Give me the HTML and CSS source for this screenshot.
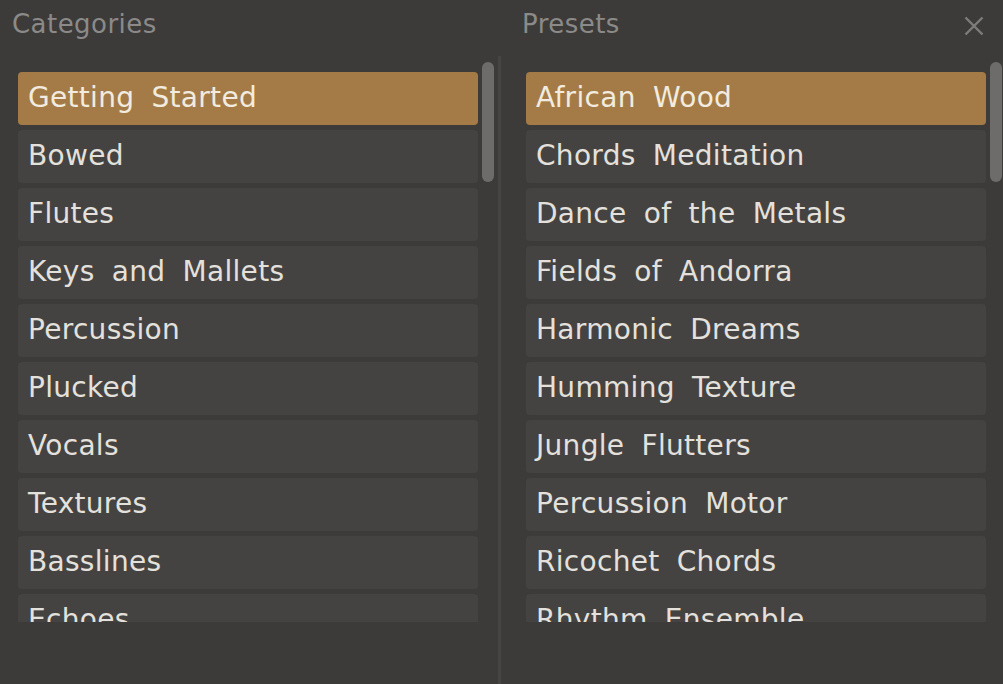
FILE: index.html
```html
<!DOCTYPE html>
<html>
<head>
<meta charset="utf-8">
<link rel="stylesheet" href="styles.css">
</head>
<body>
<div class="browser">
  <div class="head head-left"><span class="title">Categories</span></div>
  <div class="head-gap"></div>
  <div class="head head-right">
    <span class="title">Presets</span>
    <svg class="close" width="20" height="20" viewBox="0 0 20 20"><path d="M1.5 1.5 L18.5 18.5 M18.5 1.5 L1.5 18.5" stroke="#7d7c7b" stroke-width="2.4" stroke-linecap="butt"/></svg>
  </div>

  <div class="body body-left">
    <div class="list">
      <div class="item selected">Getting Started</div>
      <div class="item">Bowed</div>
      <div class="item">Flutes</div>
      <div class="item">Keys and Mallets</div>
      <div class="item">Percussion</div>
      <div class="item">Plucked</div>
      <div class="item">Vocals</div>
      <div class="item">Textures</div>
      <div class="item">Basslines</div>
      <div class="item">Echoes</div>
    </div>
    <div class="track"><div class="thumb"></div></div>
  </div>
  <div class="divider"></div>
  <div class="body body-right">
    <div class="list">
      <div class="item selected">African Wood</div>
      <div class="item">Chords Meditation</div>
      <div class="item">Dance of the Metals</div>
      <div class="item">Fields of Andorra</div>
      <div class="item">Harmonic Dreams</div>
      <div class="item">Humming Texture</div>
      <div class="item">Jungle Flutters</div>
      <div class="item">Percussion Motor</div>
      <div class="item">Ricochet Chords</div>
      <div class="item">Rhythm Ensemble</div>
    </div>
    <div class="track"><div class="thumb"></div></div>
  </div>
</div>
</body>
</html>
```

FILE: styles.css
```css
html, body {
  margin: 0;
  padding: 0;
  background: #3c3b3a;
}
body {
  width: 1003px;
  height: 684px;
  overflow: hidden;
  font-family: "DejaVu Sans", sans-serif;
}
.browser {
  display: grid;
  grid-template-columns: 498px 3px 502px;
  grid-template-rows: 56px 628px;
}
.head {
  display: flex;
  justify-content: space-between;
  align-items: flex-start;
}
.head-left {
  padding-left: 12px;
}
.head-right {
  padding-left: 21px;
  padding-right: 19px;
}
.title {
  font-size: 26px;
  line-height: 34px;
  padding-top: 7px;
  color: #8b8a89;
  letter-spacing: 0.45px;
}
.close {
  margin-top: 16px;
  display: block;
}
.divider {
  background: #464544;
}
.body {
  display: flex;
  align-items: flex-start;
  padding-top: 6px;
  gap: 4px;
}
.body-left {
  padding-left: 18px;
}
.body-right {
  padding-left: 25px;
}
.list {
  width: 460px;
  height: 550px;
  padding-top: 10px;
  overflow: hidden;
  flex: none;
}
.item {
  height: 51px;
  padding-bottom: 2px;
  margin-bottom: 5px;
  line-height: 51px;
  padding-left: 10px;
  border-radius: 4px;
  background: #444342;
  color: #e4e1dd;
  font-size: 28px;
  letter-spacing: 0.3px;
  word-spacing: 8px;
  white-space: nowrap;
}
.item.selected {
  background: #a47b47;
  color: #f2ebdf;
}
.track {
  width: 12px;
  flex: none;
}
.thumb {
  height: 120px;
  border-radius: 6px;
  background: #6e6c6a;
}
```
